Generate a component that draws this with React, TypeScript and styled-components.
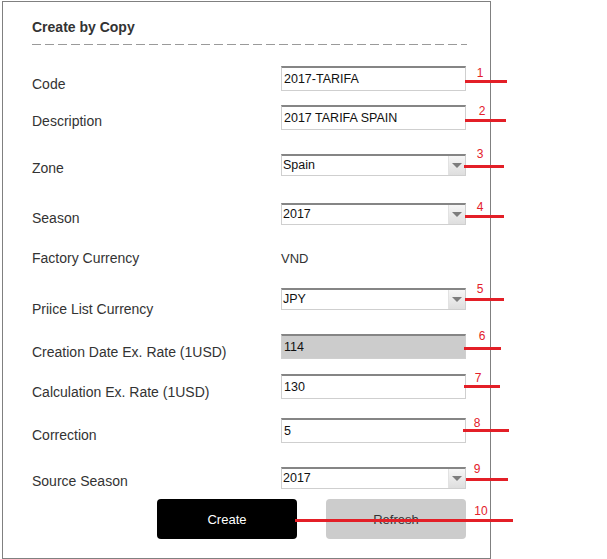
import React from "react"
import styled, { createGlobalStyle } from "styled-components"

const GlobalStyle = createGlobalStyle`
  html, body {
    margin: 0;
    padding: 0;
    background: #ffffff;
  }
  body {
    font-family: "Liberation Sans", Arial, sans-serif;
    color: #333;
  }
`

const Canvas = styled.div`
  position: relative;
  width: 607px;
  height: 559px;
  overflow: hidden;
`

const Panel = styled.div`
  box-sizing: border-box;
  margin: 1px 0 0 2px;
  width: 489px;
  height: 558px;
  border: 1px solid #808080;
  padding: 0 23px 0 29px;
  display: flex;
  flex-direction: column;
`

const Title = styled.h2`
  margin: 17px 0 0;
  font-size: 14px;
  line-height: 16px;
  font-weight: bold;
  color: #333;
`

const Dashes = styled.div`
  margin-top: 9px;
  height: 1px;
  background: repeating-linear-gradient(
    to right,
    #9a9a9a 0,
    #9a9a9a 9px,
    transparent 9px,
    transparent 13px
  );
`

const Form = styled.div`
  margin-top: 21px;
  display: flex;
  flex-direction: column;
`

const Row = styled.div<{ $h: number }>`
  display: grid;
  grid-template-columns: 249px 185px;
  align-items: start;
  height: ${(p) => p.$h}px;
`

const Label = styled.div<{ $off: number }>`
  padding-top: ${(p) => p.$off}px;
  font-size: 14px;
  line-height: 16px;
  color: #333;
  white-space: nowrap;
`

const Field = styled.div<{ $grey?: boolean }>`
  box-sizing: border-box;
  height: 25px;
  border: 1px solid #cfcfcf;
  border-top: 2px solid #858585;
  background: ${(p) => (p.$grey ? "#cccccc" : "#ffffff")};
  padding: 0 2px;
  font-size: 12.5px;
  line-height: 22px;
  color: #111;
  white-space: nowrap;
`

const SelectBox = styled.div`
  box-sizing: border-box;
  height: 22px;
  border: 1px solid #cfcfcf;
  border-top: 2px solid #858585;
  background: #fff;
  display: flex;
  align-items: stretch;
`

const SelectValue = styled.div`
  flex: 1;
  padding-left: 1px;
  font-size: 12.5px;
  line-height: 19px;
  color: #111;
`

const ArrowBox = styled.div`
  width: 16px;
  border-left: 1px solid #e2e2e2;
  background: linear-gradient(#f6f6f6, #dedede);
  display: flex;
  align-items: center;
  justify-content: center;
  &::after {
    content: "";
    width: 0;
    height: 0;
    border-left: 5px solid transparent;
    border-right: 5px solid transparent;
    border-top: 5px solid #7d7d7d;
  }
`

const Plain = styled.div<{ $off: number }>`
  padding-top: ${(p) => p.$off}px;
  font-size: 13px;
  line-height: 16px;
  color: #333;
`

const Buttons = styled.div`
  display: flex;
  justify-content: flex-end;
  gap: 29px;
  width: 434px;
`

const Button = styled.button<{ $primary?: boolean }>`
  width: 140px;
  height: 40px;
  border: none;
  border-radius: 4px;
  background: ${(p) => (p.$primary ? "#000" : "#cccccc")};
  color: ${(p) => (p.$primary ? "#fff" : "#333")};
  font-family: "Liberation Sans", Arial, sans-serif;
  font-size: 13px;
  padding: 0;
  cursor: pointer;
`

const Marker = styled.div<{ $x1: number; $x2: number; $y: number }>`
  position: absolute;
  left: ${(p) => p.$x1}px;
  top: ${(p) => p.$y}px;
  width: ${(p) => p.$x2 - p.$x1}px;
  height: 3px;
  background: #e31f27;
`

const MarkerNo = styled.span<{ $cx: number; $top: number }>`
  position: absolute;
  left: ${(p) => p.$cx}px;
  top: ${(p) => p.$top}px;
  transform: translateX(-50%);
  font-size: 12px;
  line-height: 12px;
  color: #e3202a;
`

type Control =
  | { kind: "input"; value: string; grey?: boolean }
  | { kind: "select"; value: string }
  | { kind: "text"; value: string; off: number }

interface FormRow {
  label: string
  off: number
  h: number
  control: Control
}

const rows: FormRow[] = [
  { label: "Code", off: 10, h: 39, control: { kind: "input", value: "2017-TARIFA" } },
  { label: "Description", off: 8, h: 49, control: { kind: "input", value: "2017 TARIFA SPAIN" } },
  { label: "Zone", off: 6, h: 49, control: { kind: "select", value: "Spain" } },
  { label: "Season", off: 7, h: 47, control: { kind: "select", value: "2017" } },
  { label: "Factory Currency", off: 0, h: 38, control: { kind: "text", value: "VND", off: 1 } },
  { label: "Priice List Currency", off: 13, h: 46, control: { kind: "select", value: "JPY" } },
  { label: "Creation Date Ex. Rate (1USD)", off: 10, h: 40, control: { kind: "input", value: "114", grey: true } },
  { label: "Calculation Ex. Rate (1USD)", off: 10, h: 44, control: { kind: "input", value: "130" } },
  { label: "Correction", off: 9, h: 49, control: { kind: "input", value: "5" } },
  { label: "Source Season", off: 6, h: 32, control: { kind: "select", value: "2017" } },
]

const markers = [
  { n: 1, x1: 465, x2: 507, y: 80, cx: 480, top: 67 },
  { n: 2, x1: 465, x2: 506, y: 119, cx: 482, top: 105 },
  { n: 3, x1: 464, x2: 504, y: 165, cx: 480, top: 148 },
  { n: 4, x1: 465, x2: 504, y: 215, cx: 480, top: 201 },
  { n: 5, x1: 465, x2: 504, y: 298, cx: 480, top: 283 },
  { n: 6, x1: 464, x2: 501, y: 347, cx: 482, top: 330 },
  { n: 7, x1: 464, x2: 500, y: 385, cx: 478, top: 372 },
  { n: 8, x1: 463, x2: 509, y: 429, cx: 477, top: 417 },
  { n: 9, x1: 466, x2: 508, y: 478, cx: 477, top: 463 },
  { n: 10, x1: 295, x2: 513, y: 519, cx: 481, top: 505 },
]

const renderControl = (c: Control) => {
  if (c.kind === "input") return <Field $grey={c.grey}>{c.value}</Field>
  if (c.kind === "text") return <Plain $off={c.off}>{c.value}</Plain>
  return (
    <SelectBox>
      <SelectValue>{c.value}</SelectValue>
      <ArrowBox />
    </SelectBox>
  )
}

const App: React.FC = () => {
  return (
    <Canvas>
      <GlobalStyle />
      <Panel>
        <Title>Create by Copy</Title>
        <Dashes />
        <Form>
          {rows.map((r) => (
            <Row key={r.label} $h={r.h}>
              <Label $off={r.off}>{r.label}</Label>
              {renderControl(r.control)}
            </Row>
          ))}
          <Buttons>
            <Button $primary>Create</Button>
            <Button>Refresh</Button>
          </Buttons>
        </Form>
      </Panel>

      {markers.map((m) => (
        <React.Fragment key={m.n}>
          <Marker $x1={m.x1} $x2={m.x2} $y={m.y} />
          <MarkerNo $cx={m.cx} $top={m.top}>
            {m.n}
          </MarkerNo>
        </React.Fragment>
      ))}
    </Canvas>
  )
}

export default App
